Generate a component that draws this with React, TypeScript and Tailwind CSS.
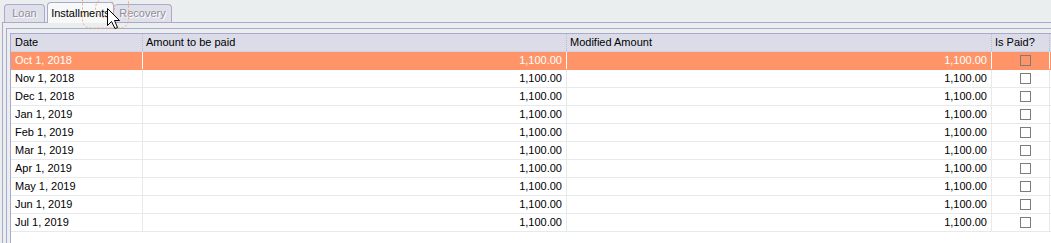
import React from "react";

const rows = [
  "Oct 1, 2018",
  "Nov 1, 2018",
  "Dec 1, 2018",
  "Jan 1, 2019",
  "Feb 1, 2019",
  "Mar 1, 2019",
  "Apr 1, 2019",
  "May 1, 2019",
  "Jun 1, 2019",
  "Jul 1, 2019",
];

function Cursor() {
  return (
    <svg
      className="absolute left-[78px] top-[-6px] z-20 pointer-events-none"
      width="56"
      height="40"
      viewBox="0 0 56 40"
    >
      <rect
        x="4.5"
        y="-6"
        width="46"
        height="40"
        rx="8"
        fill="none"
        stroke="#f2a783"
        strokeWidth="1"
        strokeDasharray="2 2"
      />
      <circle
        cx="27"
        cy="14"
        r="9.5"
        fill="none"
        stroke="#f2a783"
        strokeWidth="1"
        strokeDasharray="2 2"
      />
      <path
        d="M29.5 14.5 L29.5 31.5 L33.5 27.5 L37 34.5 L39.5 33.5 L36.5 26.5 L41.5 26.5 Z"
        fill="#ffffff"
        stroke="#000000"
        strokeWidth="1"
        strokeLinejoin="miter"
      />
    </svg>
  );
}

export default function App() {
  return (
    <div
      className="relative w-[1051px] h-[243px] overflow-hidden bg-[#eaeeee] text-[11px] leading-none text-black"
      style={{ fontFamily: '"Liberation Sans", Arial, sans-serif' }}
    >
      {/* Tabs */}
      <div className="relative flex items-end h-[22px] pl-[4px]">
        <div className="h-[18px] w-[41px] flex items-center justify-center rounded-t-[4px] border border-b-0 border-[#a9aacc] bg-[#dfe0ea] text-[#8e8e98] [text-shadow:1px_1px_0_#ffffff]">
          Loan
        </div>
        <div className="relative z-10 h-[21px] w-[67px] ml-[2px] mb-[-1px] flex items-start pt-[5px] justify-center rounded-t-[4px] border border-b-0 border-[#a9aacc] bg-[#f7f8f8]">
          Installments
        </div>
        <div className="h-[18px] w-[58px] flex items-center justify-center rounded-t-[4px] border border-b-0 border-l-0 border-[#a9aacc] bg-[#dfe0ea] text-[#8e8e98] [text-shadow:1px_1px_0_#ffffff]">
          Recovery
        </div>
        <Cursor />
      </div>

      {/* Panel frames */}
      <div className="ml-[2px] border-l border-t border-[#a9aacc] pt-[5px] pl-[3px] h-[221px]">
        <div className="border-l border-t border-[#a9aacc] pt-[4px] pl-[3px] h-full">
          <div className="border-l border-t border-[#a9aacc] bg-white h-full">
            {/* Header */}
            <div className="flex h-[18px] bg-[#dbdce8] border-b border-[#d0d2e0]">
              <div className="w-[132px] shrink-0 flex items-center pl-[4px] border-r border-dotted border-[#b8bcd8]">
                Date
              </div>
              <div className="w-[424px] shrink-0 flex items-center pl-[3px] border-r border-dotted border-[#b8bcd8]">
                Amount to be paid
              </div>
              <div className="w-[425px] shrink-0 flex items-center pl-[3px] border-r border-dotted border-[#b8bcd8]">
                Modified Amount
              </div>
              <div className="w-[58px] shrink-0 flex items-center pl-[3px] border-r border-dotted border-[#b8bcd8]">
                Is Paid?
              </div>
            </div>
            {/* Rows */}
            {rows.map((d, i) => {
              const sel = i === 0;
              return (
                <div
                  key={d}
                  className={
                    sel
                      ? "flex h-[18px] bg-[#ff9468] text-white border-b border-[#ff9468]"
                      : "flex h-[18px] bg-white border-b border-[#e6eaea]"
                  }
                >
                  <div
                    className={
                      sel
                        ? "w-[132px] shrink-0 flex items-center pl-[4px] border-r border-[#ffffff]"
                        : "w-[132px] shrink-0 flex items-center pl-[4px] border-r border-[#e6eaea]"
                    }
                  >
                    {d}
                  </div>
                  <div
                    className={
                      sel
                        ? "w-[424px] shrink-0 flex items-center justify-end pr-[4px] border-r border-[#ffffff]"
                        : "w-[424px] shrink-0 flex items-center justify-end pr-[4px] border-r border-[#e6eaea]"
                    }
                  >
                    1,100.00
                  </div>
                  <div
                    className={
                      sel
                        ? "w-[425px] shrink-0 flex items-center justify-end pr-[4px] border-r border-[#ffffff]"
                        : "w-[425px] shrink-0 flex items-center justify-end pr-[4px] border-r border-[#e6eaea]"
                    }
                  >
                    1,100.00
                  </div>
                  <div
                    className={
                      sel
                        ? "w-[58px] shrink-0 flex items-center pl-[28px] border-r border-[#ffffff]"
                        : "w-[58px] shrink-0 flex items-center pl-[28px] border-r border-[#e6eaea]"
                    }
                  >
                    <div className="w-[11px] h-[11px] border border-[#7c7c7c] bg-transparent" />
                  </div>
                </div>
              );
            })}
          </div>
        </div>
      </div>
    </div>
  );
}
